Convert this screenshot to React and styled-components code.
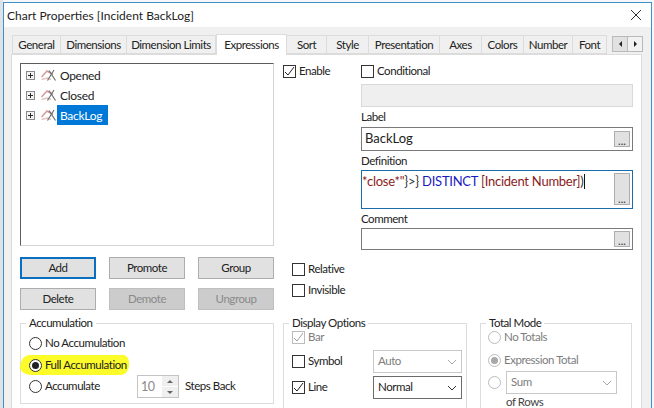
import React from "react";
import styled, { createGlobalStyle } from "styled-components";

const Global = createGlobalStyle`
  html, body {
    margin: 0;
    padding: 0;
    width: 654px;
    height: 408px;
    overflow: hidden;
    background: #f4f4f4;
    font-family: Lato, "Noto Sans", sans-serif;
    font-size: 11.5px;
    letter-spacing: -0.45px;
    color: #222;
  }
  * { box-sizing: border-box; }
`;

const Page = styled.div`
  display: flex;
  width: 654px;
  height: 408px;
  padding: 2px 3px 0 3px;
  overflow: hidden;
  background: linear-gradient(90deg, #dfe3e7 3px, #f6f7f8 3px);
`;

const Dialog = styled.div`
  width: 649px;
  height: 440px;
  flex: none;
  border: 1px solid #3f8fc9;
  background: #f0f0f0;
`;

const TitleBar = styled.div`
  height: 24px;
  padding: 0 9px 0 3px;
  background: #fff;
  display: flex;
  align-items: center;
  justify-content: space-between;
  font-size: 12px;
  letter-spacing: 0;
`;

const Strip = styled.div`
  height: 27px;
  padding: 7px 8px 0 8px;
  display: flex;
  align-items: flex-end;
`;

const Tab = styled.div`
  flex: none;
  width: ${(p) => p.$w}px;
  height: ${(p) => (p.$active ? 21 : 19)}px;
  margin-bottom: ${(p) => (p.$active ? -1 : 0)}px;
  padding-bottom: ${(p) => (p.$active ? 2 : 0)}px;
  display: flex;
  align-items: center;
  justify-content: center;
  background: ${(p) => (p.$active ? "#fff" : "#f0f0f0")};
  border: 1px solid #dcdcdc;
  border-bottom: ${(p) => (p.$active ? "none" : "1px solid #dcdcdc")};
  border-left-width: ${(p) => (p.$first || p.$active ? 1 : 0)}px;
  position: relative;
  z-index: ${(p) => (p.$active ? 1 : 0)};
  white-space: nowrap;
`;

const TabArrows = styled.div`
  margin-left: auto;
  align-self: flex-start;
  margin-top: 2px;
  display: flex;
  width: 31px;
  height: 16px;
  border: 1px solid #b9b9b9;
  background: #e1e1e1;
`;

const TabArrow = styled.span`
  flex: 1;
  display: flex;
  align-items: center;
  justify-content: center;
  & + & {
    border-left: 1px solid #b9b9b9;
    background: #f2f2f2;
  }
  &::before {
    content: "";
    border-style: solid;
    border-width: 3px 0 3px 3px;
    border-color: transparent transparent transparent #222;
    transform: ${(p) => (p.$left ? "scaleX(-1)" : "none")};
  }
`;

const Panel = styled.div`
  margin: 0 9px 0 7px;
  height: 386px;
  padding: 8px 0 0 8px;
  background: #fff;
  border: 1px solid #dcdcdc;
  border-bottom: none;
  display: flex;
  gap: 9px;
`;

const LeftCol = styled.div`
  width: 254px;
  flex: none;
  display: flex;
  flex-direction: column;
`;

const Tree = styled.div`
  height: 183px;
  padding: 1px 0 0 5px;
  border: 1px solid #d4d4d4;
  border-top-color: #5c5c5c;
  border-left-color: #5c5c5c;
`;

const TreeRow = styled.div`
  height: 20px;
  display: flex;
  align-items: center;
`;

const Expander = styled.span`
  width: 9px;
  height: 9px;
  flex: none;
  margin-right: 6px;
  border: 1px solid #8a8a8a;
  background: linear-gradient(#2b2b2b, #2b2b2b) center / 5px 1px no-repeat,
    linear-gradient(#2b2b2b, #2b2b2b) center / 1px 5px no-repeat, #f2f2f2;
`;

const TreeLabel = styled.span`
  height: 20px;
  margin-left: 1px;
  padding: 0 6px 0 3px;
  display: flex;
  align-items: center;
  font-size: 12px;
  letter-spacing: -0.3px;
  color: ${(p) => (p.$selected ? "#fff" : "#222")};
  background: ${(p) => (p.$selected ? "#0078d7" : "transparent")};
`;

const ButtonGrid = styled.div`
  margin-top: 11px;
  display: grid;
  grid-template-columns: repeat(3, 76px);
  grid-auto-rows: 22px;
  justify-content: space-between;
  row-gap: 9px;
`;

const Button = styled.div`
  display: flex;
  align-items: center;
  justify-content: center;
  padding-bottom: 2px;
  background: ${(p) => (p.$disabled ? "#cccccc" : "#e1e1e1")};
  color: ${(p) => (p.$disabled ? "#8a8a8a" : "#222")};
  border: ${(p) =>
    p.$default ? "2px solid #0a6fc0" : p.$disabled ? "1px solid #bfbfbf" : "1px solid #adadad"};
`;

const Group = styled.fieldset`
  margin: ${(p) => p.$top || 0}px 0 0 0;
  padding: 0;
  width: ${(p) => p.$w}px;
  height: ${(p) => p.$h}px;
  flex: none;
  border: 1px solid #dcdcdc;
  min-width: 0;
`;

const Legend = styled.legend`
  margin-left: 5px;
  padding: 0 3px;
  line-height: 14px;
`;

const GroupBody = styled.div`
  display: flex;
  flex-direction: column;
  margin-top: ${(p) => p.$top || 0}px;
  padding: ${(p) => p.$pad};
  gap: ${(p) => p.$gap || 0}px;
`;

const Row = styled.div`
  display: flex;
  align-items: center;
  height: ${(p) => p.$h || 16}px;
  margin-top: ${(p) => p.$top || 0}px;
  color: ${(p) => (p.$muted ? "#7d7d7d" : "#222")};
`;

/* Lato sits a pixel low next to the boxes, so lift the caption */
const Caption = styled.span`
  padding-bottom: 2px;
`;

const Highlight = styled.span`
  display: flex;
  align-items: center;
  align-self: flex-start;
  margin: -2px 0 -2px -9px;
  padding: 0 2px 0 9px;
  height: 20px;
  background: #fcfc2a;
  border-radius: 10px 6px 8px 12px / 12px 8px 10px 8px;
`;

const Box = styled.span`
  width: 13px;
  height: 13px;
  flex: none;
  margin-right: 3px;
  display: flex;
  align-items: center;
  justify-content: center;
  background: #fff;
  border: 1px solid ${(p) => (p.$muted ? "#bcbcbc" : "#333")};
  color: ${(p) => (p.$muted ? "#a0a0a0" : "#222")};
`;

const Radio = styled.span`
  width: 13px;
  height: 13px;
  flex: none;
  margin-right: ${(p) => p.$gap ?? 3}px;
  display: flex;
  align-items: center;
  justify-content: center;
  border-radius: 50%;
  background: #fff;
  border: 1px solid ${(p) => (p.$muted ? "#bcbcbc" : "#333")};
  &::after {
    content: "";
    display: ${(p) => (p.$on ? "block" : "none")};
    width: 7px;
    height: 7px;
    border-radius: 50%;
    background: ${(p) => (p.$muted ? "#a8a8a8" : "#222")};
  }
`;

const Spinner = styled.div`
  width: 42px;
  height: 23px;
  flex: none;
  margin-right: 6px;
  padding-left: 3px;
  display: flex;
  align-items: center;
  justify-content: space-between;
  border: 1px solid #c4c4c4;
  color: #8a8a8a;
  font-size: 12.5px;
`;

const SpinButtons = styled.div`
  width: 16px;
  height: 21px;
  display: flex;
  flex-direction: column;
  gap: 1px;
`;

const SpinButton = styled.span`
  flex: 1;
  background: #efefef;
  display: flex;
  align-items: center;
  justify-content: center;
  &::before {
    content: "";
    border-style: solid;
    border-width: ${(p) => (p.$down ? "3px 3px 0 3px" : "0 3px 3px 3px")};
    border-color: ${(p) =>
      p.$down
        ? "#666 transparent transparent transparent"
        : "transparent transparent #666 transparent"};
  }
`;

const RightCol = styled.div`
  flex: none;
  width: 349px;
  display: flex;
  flex-direction: column;
`;

const TopRow = styled.div`
  display: flex;
`;

const EnableCol = styled.div`
  width: 78px;
  flex: none;
`;

const Fields = styled.div`
  width: 272px;
  flex: none;
  display: flex;
  flex-direction: column;
`;

const FieldLabel = styled.div`
  height: 14px;
  line-height: 14px;
  margin: ${(p) => p.$top || 0}px 0 ${(p) => p.$bottom || 2}px;
`;

const Field = styled.div`
  height: ${(p) => p.$h}px;
  margin-top: ${(p) => p.$top || 0}px;
  display: flex;
  align-items: ${(p) => (p.$multi ? "flex-start" : "center")};
  justify-content: space-between;
  padding: ${(p) => (p.$multi ? "1px 2px 2px 0" : "0 2px 0 3px")};
  background: ${(p) => (p.$disabled ? "#efefef" : "#fff")};
  border: ${(p) =>
    p.$focus ? "1px solid #1b6ca8" : p.$disabled ? "1px solid #d9d9d9" : "1px solid #7a7a7a"};
  font-size: 13px;
  letter-spacing: 0;
  white-space: nowrap;
`;

const Code = styled.span`
  display: flex;
  align-items: center;
  height: 18px;
  letter-spacing: -0.25px;
`;

const Token = styled.span`
  color: ${(p) => p.$c};
  white-space: pre;
`;

const Caret = styled.span`
  width: 1px;
  height: 15px;
  background: #111;
`;

const Dots = styled.span`
  width: 16px;
  height: ${(p) => p.$h || 16}px;
  margin-top: ${(p) => p.$top || 0}px;
  flex: none;
  display: flex;
  align-items: flex-end;
  justify-content: center;
  padding-bottom: 1px;
  line-height: 9px;
  font-size: 11px;
  letter-spacing: 0;
  color: #333;
  background: #e1e1e1;
  border: 1px solid #adadad;
`;

const Checks = styled.div`
  margin: 11px 0 0 9px;
  display: flex;
  flex-direction: column;
  gap: 5px;
`;

const Groups = styled.div`
  margin-top: 18px;
  display: flex;
  gap: 13px;
`;

const FixedLabel = styled.div`
  width: ${(p) => p.$w}px;
  flex: none;
  display: flex;
  align-items: center;
`;

const Combo = styled.div`
  width: ${(p) => p.$w}px;
  height: 23px;
  padding: 0 4px;
  display: flex;
  align-items: center;
  justify-content: space-between;
  border: 1px solid ${(p) => (p.$muted ? "#c8c8c8" : "#6b6b6b")};
  color: ${(p) => (p.$muted ? "#7d7d7d" : "#222")};
`;

const RowsLabel = styled.div`
  margin: 2px 0 0 25px;
  line-height: 12px;
  color: #444;
`;

const CloseIcon = () => (
  <svg width="12" height="12" viewBox="0 0 12 12" fill="none" stroke="#333" strokeWidth="1">
    <path d="M1 1l10 10M11 1L1 11" />
  </svg>
);

const ChartIcon = () => (
  <svg width="15" height="14" viewBox="0 0 15 14" fill="none">
    <path d="M0.5 9 L6 3 L12 6.5" stroke="#d89a9a" strokeWidth="1.5" />
    <path d="M0.5 11.5 L6 10 L10 11.5" stroke="#e4c4c4" strokeWidth="1.4" />
    <path d="M6.5 12.5 L13 2 M8 2.5 L14.5 12.5" stroke="#707070" strokeWidth="1.2" />
  </svg>
);

const Tick = () => (
  <svg width="11" height="11" viewBox="0 0 11 11" fill="none" stroke="currentColor" strokeWidth="1">
    <path d="M1 6l3 3 6-8" />
  </svg>
);

const Chevron = ({ muted }) => (
  <svg width="10" height="6" viewBox="0 0 10 6" fill="none" stroke={muted ? "#a8a8a8" : "#333"}>
    <path d="M1 1l4 4 4-4" />
  </svg>
);

const tabs = [
  ["General", 49],
  ["Dimensions", 66],
  ["Dimension Limits", 89],
  ["Expressions", 71],
  ["Sort", 40],
  ["Style", 42],
  ["Presentation", 71],
  ["Axes", 42],
  ["Colors", 42],
  ["Number", 49],
  ["Font", 34],
];

const expressions = ["Opened", "Closed", "BackLog"];

export default function App() {
  return (
    <Page>
      <Global />
      <Dialog>
        <TitleBar>
          <span>Chart Properties [Incident BackLog]</span>
          <CloseIcon />
        </TitleBar>
        <Strip>
          {tabs.map(([name, w], i) => (
            <Tab key={name} $w={w} $first={i === 0} $active={name === "Expressions"}>
              {name}
            </Tab>
          ))}
          <TabArrows>
            <TabArrow $left />
            <TabArrow />
          </TabArrows>
        </Strip>
        <Panel>
          <LeftCol>
            <Tree>
              {expressions.map((name) => (
                <TreeRow key={name}>
                  <Expander />
                  <ChartIcon />
                  <TreeLabel $selected={name === "BackLog"}>{name}</TreeLabel>
                </TreeRow>
              ))}
            </Tree>
            <ButtonGrid>
              <Button $default>Add</Button>
              <Button>Promote</Button>
              <Button>Group</Button>
              <Button>Delete</Button>
              <Button $disabled>Demote</Button>
              <Button $disabled>Ungroup</Button>
            </ButtonGrid>
            <Group $w={254} $h={88} $top={6}>
              <Legend>Accumulation</Legend>
              <GroupBody $pad="5px 8px 0" $gap={5}>
                <Row>
                  <Radio />
                  <Caption>No Accumulation</Caption>
                </Row>
                <Row $top={1}>
                  <Highlight>
                    <Radio $on />
                    <Caption>Full Accumulation</Caption>
                  </Highlight>
                </Row>
                <Row $h={17}>
                  <FixedLabel $w={108}>
                    <Radio />
                    <Caption>Accumulate</Caption>
                  </FixedLabel>
                  <Spinner>
                    10
                    <SpinButtons>
                      <SpinButton />
                      <SpinButton $down />
                    </SpinButtons>
                  </Spinner>
                  <Caption>Steps Back</Caption>
                </Row>
              </GroupBody>
            </Group>
          </LeftCol>
          <RightCol>
            <TopRow>
              <EnableCol>
                <Row>
                  <Box>
                    <Tick />
                  </Box>
                  <Caption>Enable</Caption>
                </Row>
              </EnableCol>
              <Fields>
                <Row>
                  <Box />
                  <Caption>Conditional</Caption>
                </Row>
                <Field $h={23} $top={5} $disabled />
                <FieldLabel $top={3} $bottom={3}>Label</FieldLabel>
                <Field $h={24}>
                  <Caption>BackLog</Caption>
                  <Dots>...</Dots>
                </Field>
                <FieldLabel $top={3}>Definition</FieldLabel>
                <Field $h={39} $focus $multi>
                  <Code>
                    <Token $c="#8a1c1c">*close*"</Token>
                    <Token $c="#333">{"}>} "}</Token>
                    <Token $c="#1a1ac0">DISTINCT </Token>
                    <Token $c="#8a1c1c">[Incident Number]</Token>
                    <Token $c="#333">)</Token>
                    <Caret />
                  </Code>
                  <Dots $h={32} $top={1}>...</Dots>
                </Field>
                <FieldLabel $top={3}>Comment</FieldLabel>
                <Field $h={22}>
                  <span />
                  <Dots>...</Dots>
                </Field>
              </Fields>
            </TopRow>
            <Checks>
              <Row>
                <Box />
                <Caption>Relative</Caption>
              </Row>
              <Row>
                <Box />
                <Caption>Invisible</Caption>
              </Row>
            </Checks>
            <Groups>
              <Group $w={184} $h={110}>
                <Legend>Display Options</Legend>
                <GroupBody $top={-1} $pad="0 4px 0 8px" $gap={3}>
                  <Row $muted>
                    <Box $muted>
                      <Tick />
                    </Box>
                    <Caption>Bar</Caption>
                  </Row>
                  <Row $h={23} $top={2}>
                    <FixedLabel $w={81}>
                      <Box />
                      <Caption>Symbol</Caption>
                    </FixedLabel>
                    <Combo $w={89} $muted>
                      <Caption>Auto</Caption>
                      <Chevron muted />
                    </Combo>
                  </Row>
                  <Row $h={23}>
                    <FixedLabel $w={81}>
                      <Box>
                        <Tick />
                      </Box>
                      <Caption>Line</Caption>
                    </FixedLabel>
                    <Combo $w={89}>
                      <Caption>Normal</Caption>
                      <Chevron />
                    </Combo>
                  </Row>
                </GroupBody>
              </Group>
              <Group $w={152} $h={110}>
                <Legend>Total Mode</Legend>
                <GroupBody $top={-1} $pad="0 7px" $gap={7}>
                  <Row $muted>
                    <Radio $muted />
                    <Caption>No Totals</Caption>
                  </Row>
                  <Row $muted>
                    <Radio $muted $on />
                    <Caption>Expression Total</Caption>
                  </Row>
                  <Row $muted $h={23} $top={-4}>
                    <Radio $muted $gap={5} />
                    <Combo $w={111} $muted>
                      <Caption>Sum</Caption>
                      <Chevron muted />
                    </Combo>
                  </Row>
                </GroupBody>
                <RowsLabel>of Rows</RowsLabel>
              </Group>
            </Groups>
          </RightCol>
        </Panel>
      </Dialog>
    </Page>
  );
}
